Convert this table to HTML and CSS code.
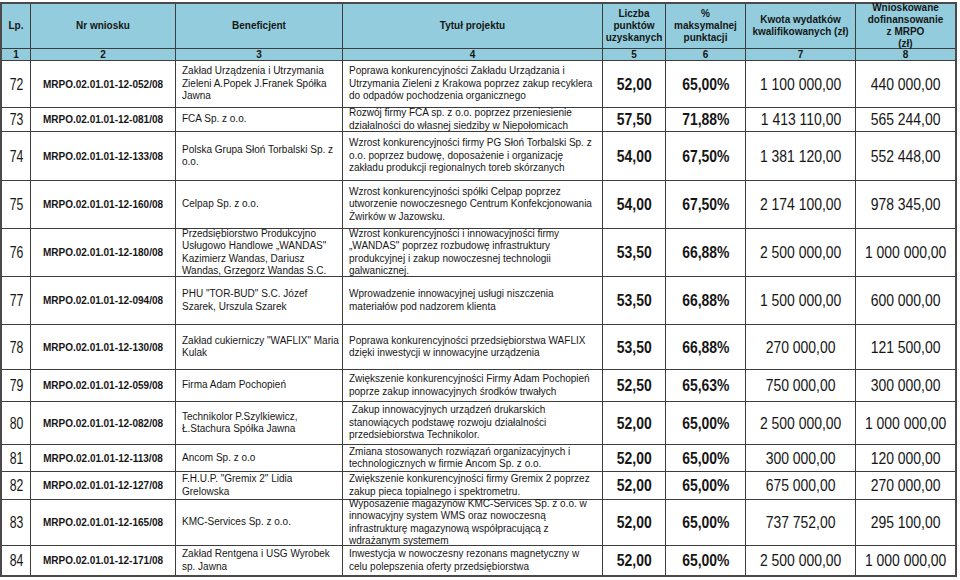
FILE: index.html
```html
<!DOCTYPE html>
<html lang="pl">
<head>
<meta charset="utf-8">
<title>Lista projektów MRPO</title>
<link rel="stylesheet" href="styles.css">
</head>
<body>
<div class="sheet">
  <div class="hd">Lp.</div>
  <div class="hd">Nr wniosku</div>
  <div class="hd">Beneficjent</div>
  <div class="hd">Tytuł projektu</div>
  <div class="hd">Liczba<br>punktów<br>uzyskanych</div>
  <div class="hd">%<br>maksymalnej<br>punktacji</div>
  <div class="hd">Kwota wydatków<br>kwalifikowanych (zł)</div>
  <div class="hd">Wnioskowane<br>dofinansowanie<br>z MRPO<br>(zł)</div>

  <div class="idx">1</div><div class="idx">2</div><div class="idx">3</div><div class="idx">4</div>
  <div class="idx">5</div><div class="idx">6</div><div class="idx">7</div><div class="idx">8</div>

  <div class="lp"><span class="n">72</span></div><div class="nr">MRPO.02.01.01-12-052/08</div>
  <div class="tx">Zakład Urządzenia i Utrzymania<br>Zieleni A.Popek J.Franek Spółka<br>Jawna</div>
  <div class="tx">Poprawa konkurencyjności Zakładu Urządzania i<br>Utrzymania Zieleni z Krakowa poprzez zakup recyklera<br>do odpadów pochodzenia organicznego</div>
  <div class="pt"><span class="n">52,00</span></div><div class="pt"><span class="n">65,00%</span></div><div class="am"><span class="n">1 100 000,00</span></div><div class="am"><span class="n">440 000,00</span></div>

  <div class="lp"><span class="n">73</span></div><div class="nr">MRPO.02.01.01-12-081/08</div>
  <div class="tx">FCA Sp. z o.o.</div>
  <div class="tx">Rozwój firmy FCA sp. z o.o. poprzez przeniesienie<br>działalności do własnej siedziby w Niepołomicach</div>
  <div class="pt"><span class="n">57,50</span></div><div class="pt"><span class="n">71,88%</span></div><div class="am"><span class="n">1 413 110,00</span></div><div class="am"><span class="n">565 244,00</span></div>

  <div class="lp"><span class="n">74</span></div><div class="nr">MRPO.02.01.01-12-133/08</div>
  <div class="tx">Polska Grupa Słoń Torbalski Sp. z<br>o.o.</div>
  <div class="tx">Wzrost konkurencyjności firmy PG Słoń Torbalski Sp. z<br>o.o. poprzez budowę, doposażenie i organizację<br>zakładu produkcji regionalnych toreb skórzanych</div>
  <div class="pt"><span class="n">54,00</span></div><div class="pt"><span class="n">67,50%</span></div><div class="am"><span class="n">1 381 120,00</span></div><div class="am"><span class="n">552 448,00</span></div>

  <div class="lp"><span class="n">75</span></div><div class="nr">MRPO.02.01.01-12-160/08</div>
  <div class="tx">Celpap Sp. z o.o.</div>
  <div class="tx">Wzrost konkurencyjności spółki Celpap poprzez<br>utworzenie nowoczesnego Centrum Konfekcjonowania<br>Żwirków w Jazowsku.</div>
  <div class="pt"><span class="n">54,00</span></div><div class="pt"><span class="n">67,50%</span></div><div class="am"><span class="n">2 174 100,00</span></div><div class="am"><span class="n">978 345,00</span></div>

  <div class="lp"><span class="n">76</span></div><div class="nr">MRPO.02.01.01-12-180/08</div>
  <div class="tx">Przedsiębiorstwo Produkcyjno<br>Usługowo Handlowe „WANDAS"<br>Kazimierz Wandas, Dariusz<br>Wandas, Grzegorz Wandas S.C.</div>
  <div class="tx">Wzrost konkurencyjności i innowacyjności firmy<br>„WANDAS" poprzez rozbudowę infrastruktury<br>produkcyjnej i zakup nowoczesnej technologii<br>galwanicznej.</div>
  <div class="pt"><span class="n">53,50</span></div><div class="pt"><span class="n">66,88%</span></div><div class="am"><span class="n">2 500 000,00</span></div><div class="am"><span class="n">1 000 000,00</span></div>

  <div class="lp"><span class="n">77</span></div><div class="nr">MRPO.02.01.01-12-094/08</div>
  <div class="tx">PHU "TOR-BUD" S.C. Józef<br>Szarek, Urszula Szarek</div>
  <div class="tx">Wprowadzenie innowacyjnej usługi niszczenia<br>materiałów pod nadzorem klienta</div>
  <div class="pt"><span class="n">53,50</span></div><div class="pt"><span class="n">66,88%</span></div><div class="am"><span class="n">1 500 000,00</span></div><div class="am"><span class="n">600 000,00</span></div>

  <div class="lp"><span class="n">78</span></div><div class="nr">MRPO.02.01.01-12-130/08</div>
  <div class="tx">Zakład cukierniczy "WAFLIX" Maria<br>Kulak</div>
  <div class="tx">Poprawa konkurencyjności przedsiębiorstwa WAFLIX<br>dzięki inwestycji w innowacyjne urządzenia</div>
  <div class="pt"><span class="n">53,50</span></div><div class="pt"><span class="n">66,88%</span></div><div class="am"><span class="n">270 000,00</span></div><div class="am"><span class="n">121 500,00</span></div>

  <div class="lp"><span class="n">79</span></div><div class="nr">MRPO.02.01.01-12-059/08</div>
  <div class="tx">Firma Adam Pochopień</div>
  <div class="tx">Zwiększenie konkurencyjności Firmy Adam Pochopień<br>poprze zakup innowacyjnych środków trwałych</div>
  <div class="pt"><span class="n">52,50</span></div><div class="pt"><span class="n">65,63%</span></div><div class="am"><span class="n">750 000,00</span></div><div class="am"><span class="n">300 000,00</span></div>

  <div class="lp"><span class="n">80</span></div><div class="nr">MRPO.02.01.01-12-082/08</div>
  <div class="tx">Technikolor P.Szylkiewicz,<br>Ł.Stachura Spółka Jawna</div>
  <div class="tx">&nbsp;Zakup innowacyjnych urządzeń drukarskich<br>stanowiących podstawę rozwoju działalności<br>przedsiebiorstwa Technikolor.</div>
  <div class="pt"><span class="n">52,00</span></div><div class="pt"><span class="n">65,00%</span></div><div class="am"><span class="n">2 500 000,00</span></div><div class="am"><span class="n">1 000 000,00</span></div>

  <div class="lp"><span class="n">81</span></div><div class="nr">MRPO.02.01.01-12-113/08</div>
  <div class="tx">Ancom Sp. z o.o</div>
  <div class="tx">Zmiana stosowanych rozwiązań organizacyjnych i<br>technologicznych w firmie Ancom Sp. z o.o.</div>
  <div class="pt"><span class="n">52,00</span></div><div class="pt"><span class="n">65,00%</span></div><div class="am"><span class="n">300 000,00</span></div><div class="am"><span class="n">120 000,00</span></div>

  <div class="lp"><span class="n">82</span></div><div class="nr">MRPO.02.01.01-12-127/08</div>
  <div class="tx">F.H.U.P. "Gremix 2" Lidia<br>Grelowska</div>
  <div class="tx">Zwiększenie konkurencyjności firmy Gremix 2 poprzez<br>zakup pieca topialnego i spektrometru.</div>
  <div class="pt"><span class="n">52,00</span></div><div class="pt"><span class="n">65,00%</span></div><div class="am"><span class="n">675 000,00</span></div><div class="am"><span class="n">270 000,00</span></div>

  <div class="lp"><span class="n">83</span></div><div class="nr">MRPO.02.01.01-12-165/08</div>
  <div class="tx">KMC-Services Sp. z o.o.</div>
  <div class="tx">Wyposażenie magazynów KMC-Services Sp. z o.o. w<br>innowacyjny system WMS oraz nowoczesną<br>infrastrukturę magazynową współpracującą z<br>wdrażanym systemem</div>
  <div class="pt"><span class="n">52,00</span></div><div class="pt"><span class="n">65,00%</span></div><div class="am"><span class="n">737 752,00</span></div><div class="am"><span class="n">295 100,00</span></div>

  <div class="lp"><span class="n">84</span></div><div class="nr">MRPO.02.01.01-12-171/08</div>
  <div class="tx">Zakład Rentgena i USG Wyrobek<br>sp. Jawna</div>
  <div class="tx">Inwestycja w nowoczesny rezonans magnetyczny w<br>celu polepszenia oferty przedsiębiorstwa</div>
  <div class="pt"><span class="n">52,00</span></div><div class="pt"><span class="n">65,00%</span></div><div class="am"><span class="n">2 500 000,00</span></div><div class="am"><span class="n">1 000 000,00</span></div>
</div>
</body>
</html>
```

FILE: styles.css
```css
html, body {
  margin: 0;
  padding: 0;
  background: #ffffff;
}

body {
  font-family: "Liberation Sans", Arial, sans-serif;
  color: #161616;
}

.sheet {
  display: grid;
  grid-template-columns: 29px 145px 167px 260px 63px 80px 110px 99px;
  grid-template-rows: 45px 12px 47px 24px 49px 48px 48px 48px 45px 32px 43px 27px 28px 46px 29px;
  width: max-content;
  margin-top: 2px;
  border: 2px solid #4a4a4a;
  background: #ffffff;
}

.sheet > div {
  box-sizing: border-box;
  border-right: 1px solid #3d3d3d;
  border-bottom: 1px solid #3d3d3d;
  display: flex;
  align-items: center;
  justify-content: center;
  text-align: center;
  white-space: nowrap;
  min-width: 0;
  min-height: 0;
}

.sheet > div:nth-child(8n) {
  border-right: none;
}

.sheet > div:nth-last-child(-n+8) {
  border-bottom: none;
}

.hd,
.idx {
  background: #93cddd;
  font-weight: bold;
  font-size: 10px;
  line-height: 12px;
}

.idx {
  line-height: 11px;
}

.nr {
  font-weight: bold;
  font-size: 10px;
}

.tx {
  justify-content: flex-start !important;
  text-align: left !important;
  padding-left: 6px;
  font-size: 10px;
  line-height: 12.5px;
}

.lp,
.pt,
.am {
  font-size: 17px;
  padding-top: 1px;
}

.pt {
  font-weight: bold;
}

.n {
  display: inline-block;
  transform: scaleX(0.82);
  transform-origin: center;
}

.lp .n {
  transform: scaleX(0.72);
}
```
